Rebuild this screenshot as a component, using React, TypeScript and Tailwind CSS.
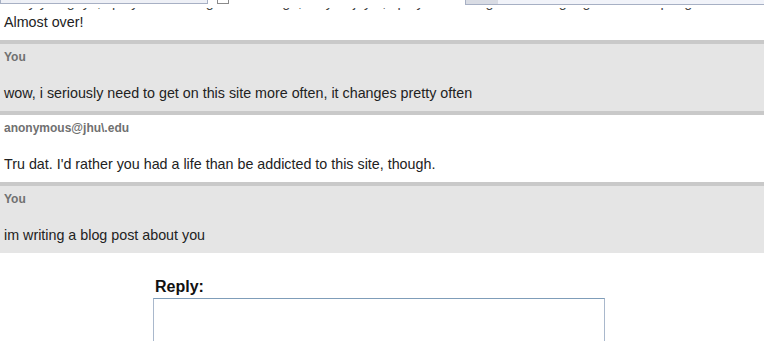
import React from "react";

const comments = [
  { id: 1, author: "You", text: "wow, i seriously need to get on this site more often, it changes pretty often", shade: true },
  { id: 2, author: "anonymous@jhu\\.edu", text: "Tru dat. I'd rather you had a life than be addicted to this site, though.", shade: false },
  { id: 3, author: "You", text: "im writing a blog post about you", shade: true },
];

const App = () => {
  return (
    <div className="w-[764px] h-[341px] overflow-hidden bg-white text-[#222] font-['Liberation_Sans',Arial,sans-serif]">
      {/* clipped form strip from the row above */}
      <div className="flex h-[5px] items-start">
        <div className="w-[208px] h-[4px] bg-[#eef0f6] border-b border-x border-[#a7b0c4]" />
        <div className="ml-[9px] w-[12px] h-[4px] bg-white border-b border-x border-[#8a8a8a]" />
        <div className="ml-[236px] w-[33px] h-[5px] bg-[#d9dce4] border-b border-l border-[#a7b0c4]" />
        <div className="flex-1 h-[5px] bg-[#f1f3f9] border-b border-[#a7b0c4]" />
      </div>
      <div className="mt-[3px] h-[5px] overflow-hidden text-[14.3px] leading-[18px] pl-1 whitespace-nowrap text-[#444]">
        <div className="-mt-[15px]">
          sorry you guys, i played with Regina and Sage, they enjoy it, i played with ragna all along together this spring
        </div>
      </div>
      <div className="px-1 pb-[9px] text-[14.3px] leading-[18px]">Almost over!</div>

      {comments.map((c) => (
        <div
          key={c.id}
          className={`border-t-4 border-[#c9c9c9] px-1 pt-[6px] pb-[9px] ${c.shade ? "bg-[#e5e5e5]" : "bg-white"}`}
        >
          <div className="text-[12px] leading-[14px] font-bold text-[#707070]">{c.author}</div>
          <div className="mt-[20px] text-[14.3px] leading-[18px]">{c.text}</div>
        </div>
      ))}

      <div className="pl-[153px] pt-[25px]">
        <div className="pl-[2px] text-[16px] leading-[18px] font-bold text-[#111]">Reply:</div>
        <textarea className="block mt-[2px] w-[452px] h-[80px] bg-white border border-[#a9b8cc] border-t-[#7f9db9] resize-none outline-none" />
      </div>
    </div>
  );
};

export default App;
